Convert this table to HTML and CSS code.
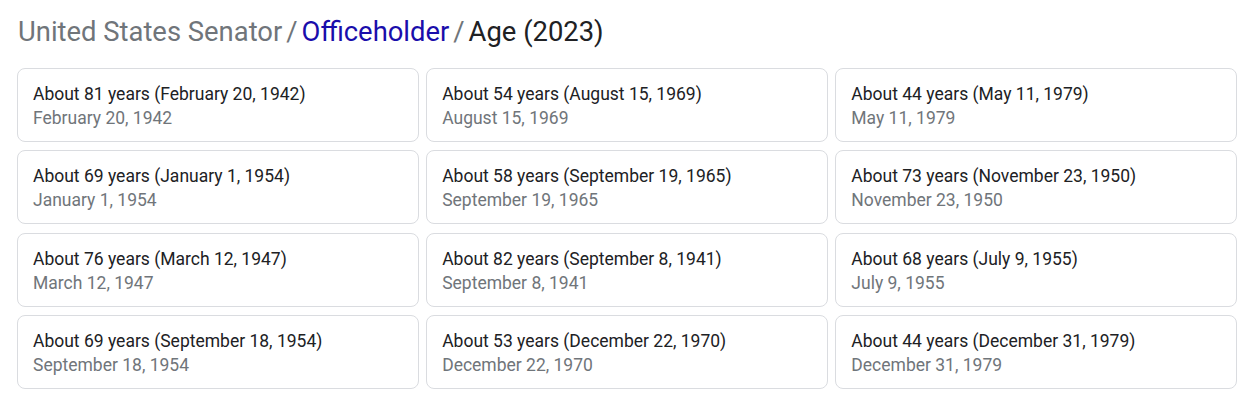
FILE: index.html
```html
<!DOCTYPE html>
<html>
<head>
<meta charset="utf-8">
<link rel="stylesheet" href="styles.css">
</head>
<body>
<div class="page">
  <h1 class="crumbs"><span class="muted">United States Senator</span><span class="sep">/</span><a class="link" href="#">Officeholder</a><span class="sep">/</span><span class="current">Age (2023)</span></h1>
  <div class="grid">
    <div class="card"><div class="primary">About 81 years (February 20, 1942)</div><div class="secondary">February 20, 1942</div></div>
    <div class="card"><div class="primary">About 54 years (August 15, 1969)</div><div class="secondary">August 15, 1969</div></div>
    <div class="card"><div class="primary">About 44 years (May 11, 1979)</div><div class="secondary">May 11, 1979</div></div>
    <div class="card"><div class="primary">About 69 years (January 1, 1954)</div><div class="secondary">January 1, 1954</div></div>
    <div class="card"><div class="primary">About 58 years (September 19, 1965)</div><div class="secondary">September 19, 1965</div></div>
    <div class="card"><div class="primary">About 73 years (November 23, 1950)</div><div class="secondary">November 23, 1950</div></div>
    <div class="card"><div class="primary">About 76 years (March 12, 1947)</div><div class="secondary">March 12, 1947</div></div>
    <div class="card"><div class="primary">About 82 years (September 8, 1941)</div><div class="secondary">September 8, 1941</div></div>
    <div class="card"><div class="primary">About 68 years (July 9, 1955)</div><div class="secondary">July 9, 1955</div></div>
    <div class="card"><div class="primary">About 69 years (September 18, 1954)</div><div class="secondary">September 18, 1954</div></div>
    <div class="card"><div class="primary">About 53 years (December 22, 1970)</div><div class="secondary">December 22, 1970</div></div>
    <div class="card"><div class="primary">About 44 years (December 31, 1979)</div><div class="secondary">December 31, 1979</div></div>
  </div>
</div>
</body>
</html>
```

FILE: styles.css
```css
* { box-sizing: border-box; }
html, body { margin: 0; padding: 0; background: #ffffff; }
body { font-family: Roboto, "Liberation Sans", Arial, sans-serif; color: #202124; }
.page { padding: 14px 4px 0 17px; width: 1241px; }
.crumbs { margin: 0 0 18px 1px; font-size: 27.4px; font-weight: 400; line-height: 36px; }
.muted { color: #70757a; }
.sep { color: #70757a; margin: 0 4px; }
.link { color: #1a0dab; text-decoration: none; }
.current { color: #202124; }
.grid { display: grid; grid-template-columns: repeat(3, 1fr); gap: 8.33px 7.5px; width: 1220px; }
.card { border: 1px solid #dadce0; border-radius: 8px; padding: 13px 15px 11px; height: 74px; }
.primary { font-size: 17.5px; line-height: 24px; color: #202124; }
.secondary { font-size: 17.5px; line-height: 24px; color: #70757a; }
```
